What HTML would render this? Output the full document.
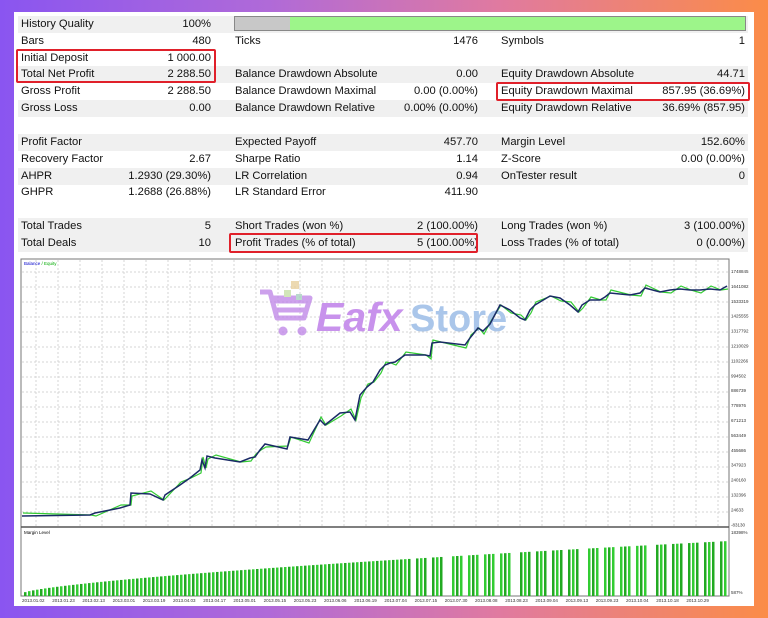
<!DOCTYPE html>
<html><head><meta charset="utf-8"><style>
*{margin:0;padding:0;box-sizing:border-box}
body{width:768px;height:618px;overflow:hidden;background:linear-gradient(90deg,#8a55f0 0%,#b06ad8 35%,#e07aa0 65%,#fb8c48 100%);font-family:"Liberation Sans",sans-serif;position:relative}
.panel{position:absolute;left:14px;top:12px;width:740px;height:594px;background:#fff}
.row{position:absolute;left:18px;width:730px;height:17px;font-size:11.2px;color:#111;line-height:17px}
.row.g{background:#f0f0f0}
.row span{position:absolute;white-space:nowrap}
.l1{left:3px}.v1{right:537px}.l2{left:217px}.v2{right:270px}.l3{left:483px}.v3{right:3px}
.box{position:absolute;border:2px solid #e0202a;border-radius:2px}
</style></head><body>
<div class="panel"></div>
<div class="row g" style="top:16px"><span class="l1">History Quality</span><span class="v1">100%</span></div>
<div style="position:absolute;left:234px;top:16px;width:512px;height:15px;border:1px solid #888;background:#9df58a"><div style="width:55px;height:13px;background:#c8c8c8"></div></div>
<div class="row" style="top:33px"><span class="l1">Bars</span><span class="v1">480</span><span class="l2">Ticks</span><span class="v2">1476</span><span class="l3">Symbols</span><span class="v3">1</span></div>
<div class="row" style="top:50px"><span class="l1">Initial Deposit</span><span class="v1">1 000.00</span></div>
<div class="row g" style="top:66px"><span class="l1">Total Net Profit</span><span class="v1">2 288.50</span><span class="l2">Balance Drawdown Absolute</span><span class="v2">0.00</span><span class="l3">Equity Drawdown Absolute</span><span class="v3">44.71</span></div>
<div class="row" style="top:83px"><span class="l1">Gross Profit</span><span class="v1">2 288.50</span><span class="l2">Balance Drawdown Maximal</span><span class="v2">0.00 (0.00%)</span><span class="l3">Equity Drawdown Maximal</span><span class="v3">857.95 (36.69%)</span></div>
<div class="row g" style="top:100px"><span class="l1">Gross Loss</span><span class="v1">0.00</span><span class="l2">Balance Drawdown Relative</span><span class="v2">0.00% (0.00%)</span><span class="l3">Equity Drawdown Relative</span><span class="v3">36.69% (857.95)</span></div>
<div class="row g" style="top:134px"><span class="l1">Profit Factor</span><span class="l2">Expected Payoff</span><span class="v2">457.70</span><span class="l3">Margin Level</span><span class="v3">152.60%</span></div>
<div class="row" style="top:151px"><span class="l1">Recovery Factor</span><span class="v1">2.67</span><span class="l2">Sharpe Ratio</span><span class="v2">1.14</span><span class="l3">Z-Score</span><span class="v3">0.00 (0.00%)</span></div>
<div class="row g" style="top:168px"><span class="l1">AHPR</span><span class="v1">1.2930 (29.30%)</span><span class="l2">LR Correlation</span><span class="v2">0.94</span><span class="l3">OnTester result</span><span class="v3">0</span></div>
<div class="row" style="top:184px"><span class="l1">GHPR</span><span class="v1">1.2688 (26.88%)</span><span class="l2">LR Standard Error</span><span class="v2">411.90</span></div>
<div class="row g" style="top:218px"><span class="l1">Total Trades</span><span class="v1">5</span><span class="l2">Short Trades (won %)</span><span class="v2">2 (100.00%)</span><span class="l3">Long Trades (won %)</span><span class="v3">3 (100.00%)</span></div>
<div class="row g" style="top:235px"><span class="l1">Total Deals</span><span class="v1">10</span><span class="l2">Profit Trades (% of total)</span><span class="v2">5 (100.00%)</span><span class="l3">Loss Trades (% of total)</span><span class="v3">0 (0.00%)</span></div>
<div class="box" style="left:16px;top:49px;width:200px;height:34px"></div>
<div class="box" style="left:229px;top:233px;width:249px;height:20px"></div>
<div class="box" style="left:496px;top:82px;width:254px;height:19px"></div>
<svg id="ch" style="position:absolute;left:0;top:0" width="768" height="618"></svg>
<script>
const s=document.getElementById('ch');let h='';
h+='<rect x="21" y="259" width="708" height="337" fill="#fff" stroke="#777"/>';
for(let x=36;x<729;x+=22)h+=`<line x1="${x}" y1="260" x2="${x}" y2="526" stroke="#d4d4d4" stroke-dasharray="2,2"/>`;
for(let y=272;y<526;y+=15)h+=`<line x1="22" y1="${y}" x2="728" y2="${y}" stroke="#d4d4d4" stroke-dasharray="2,2"/>`;
h+='<line x1="21" y1="527" x2="729" y2="527" stroke="#555" stroke-width="1.5"/>';
const labs=['1748845','1641082','1533319','1425555','1317792','1210029','1102266','994502','886739','778976','671213','563449','455686','347923','240160','132396','24633','-83130'];
labs.forEach((t,i)=>h+=`<text x="731" y="${273+i*14.9}" font-size="4.5" fill="#333" font-family="Liberation Sans">${t}</text>`);
h+='<text x="731" y="534" font-size="4.5" fill="#333">18398%</text><text x="731" y="594" font-size="4.5" fill="#333">587%</text>';
h+='<text x="24" y="265" font-size="4.5" fill="#00c">Balance <tspan fill="#0a0">/ Equity</tspan></text><text x="24" y="534" font-size="4.5">Margin Level</text>';
h+='<g opacity="0.8"><path d="M260 292h10l7 26h27l6-20h-38M272 301h36M276 310h30" fill="none" stroke="#c18ae8" stroke-width="5" stroke-linejoin="round"/><circle cx="283" cy="331" r="4.5" fill="#c18ae8"/><circle cx="302" cy="331" r="4.5" fill="#c18ae8"/><rect x="291" y="281" width="8" height="8" fill="#e8d0a0"/><rect x="284" y="290" width="7" height="7" fill="#c8e0a8"/><rect x="296" y="294" width="6" height="6" fill="#a8d0c0"/></g>';
h+='<text x="316" y="331" font-size="41" font-weight="bold" font-style="italic" fill="#c892ec" font-family="Liberation Sans">Eafx</text><text x="410" y="331" font-size="38" font-weight="bold" fill="#aac6ea" font-family="Liberation Sans">Store</text>';
const P=[[22,516],[90,515],[95,513],[120,508],[130,505],[131,493],[150,494],[163,500],[165,495],[180,485],[190,478],[200,470],[202,460],[205,468],[207,456],[215,458],[240,462],[250,458],[255,457],[260,450],[265,444],[287,449],[290,437],[308,440],[320,420],[325,425],[340,413],[350,412],[355,420],[360,395],[367,387],[373,382],[380,370],[385,365],[390,363],[395,362],[405,355],[425,355],[430,356],[432,343],[440,342],[465,345],[470,338],[478,328],[483,331],[490,324],[500,305],[510,310],[520,318],[525,320],[530,310],[535,305],[550,296],[560,298],[570,305],[578,312],[582,305],[590,300],[600,300],[605,297],[610,293],[630,295],[640,293],[645,288],[660,292],[670,290],[680,289],[690,290],[700,290],[710,289],[720,290],[727,286]];
let d='',e='';P.forEach((p,i)=>{d+=(i?'L':'M')+p[0]+' '+p[1];e+=(i?'L':'M')+(p[0]+1)+' '+(p[1]+((i%3)-1)*3)});
h+=`<path d="${e}" fill="none" stroke="#3c3" stroke-width="1.2"/><path d="${d}" fill="none" stroke="#1a2a66" stroke-width="1.5"/>`;
for(let x=24;x<727;x+=4){if(Math.sin(x*0.37)>0.6&&x>400)continue;const hh=3+52*Math.pow((x-22)/706,0.7);h+=`<rect x="${x}" y="${596-hh}" width="2.5" height="${hh}" fill="${x%8?'#3c3':'#2a2'}"/>`}
const dates=['2013.01.02','2013.01.23','2013.02.13','2013.03.01','2013.03.19','2013.04.03','2013.04.17','2013.05.01','2013.05.15','2013.05.23','2013.06.06','2013.06.19','2013.07.04','2013.07.15','2013.07.30','2013.08.08','2013.08.23','2013.09.04','2013.09.13','2013.09.23','2013.10.04','2013.10.18','2013.10.29'];
dates.forEach((t,i)=>h+=`<text x="${22+i*30.2}" y="602" font-size="4.5" fill="#333">${t}</text>`);
s.innerHTML=h;
</script>
</body></html>
